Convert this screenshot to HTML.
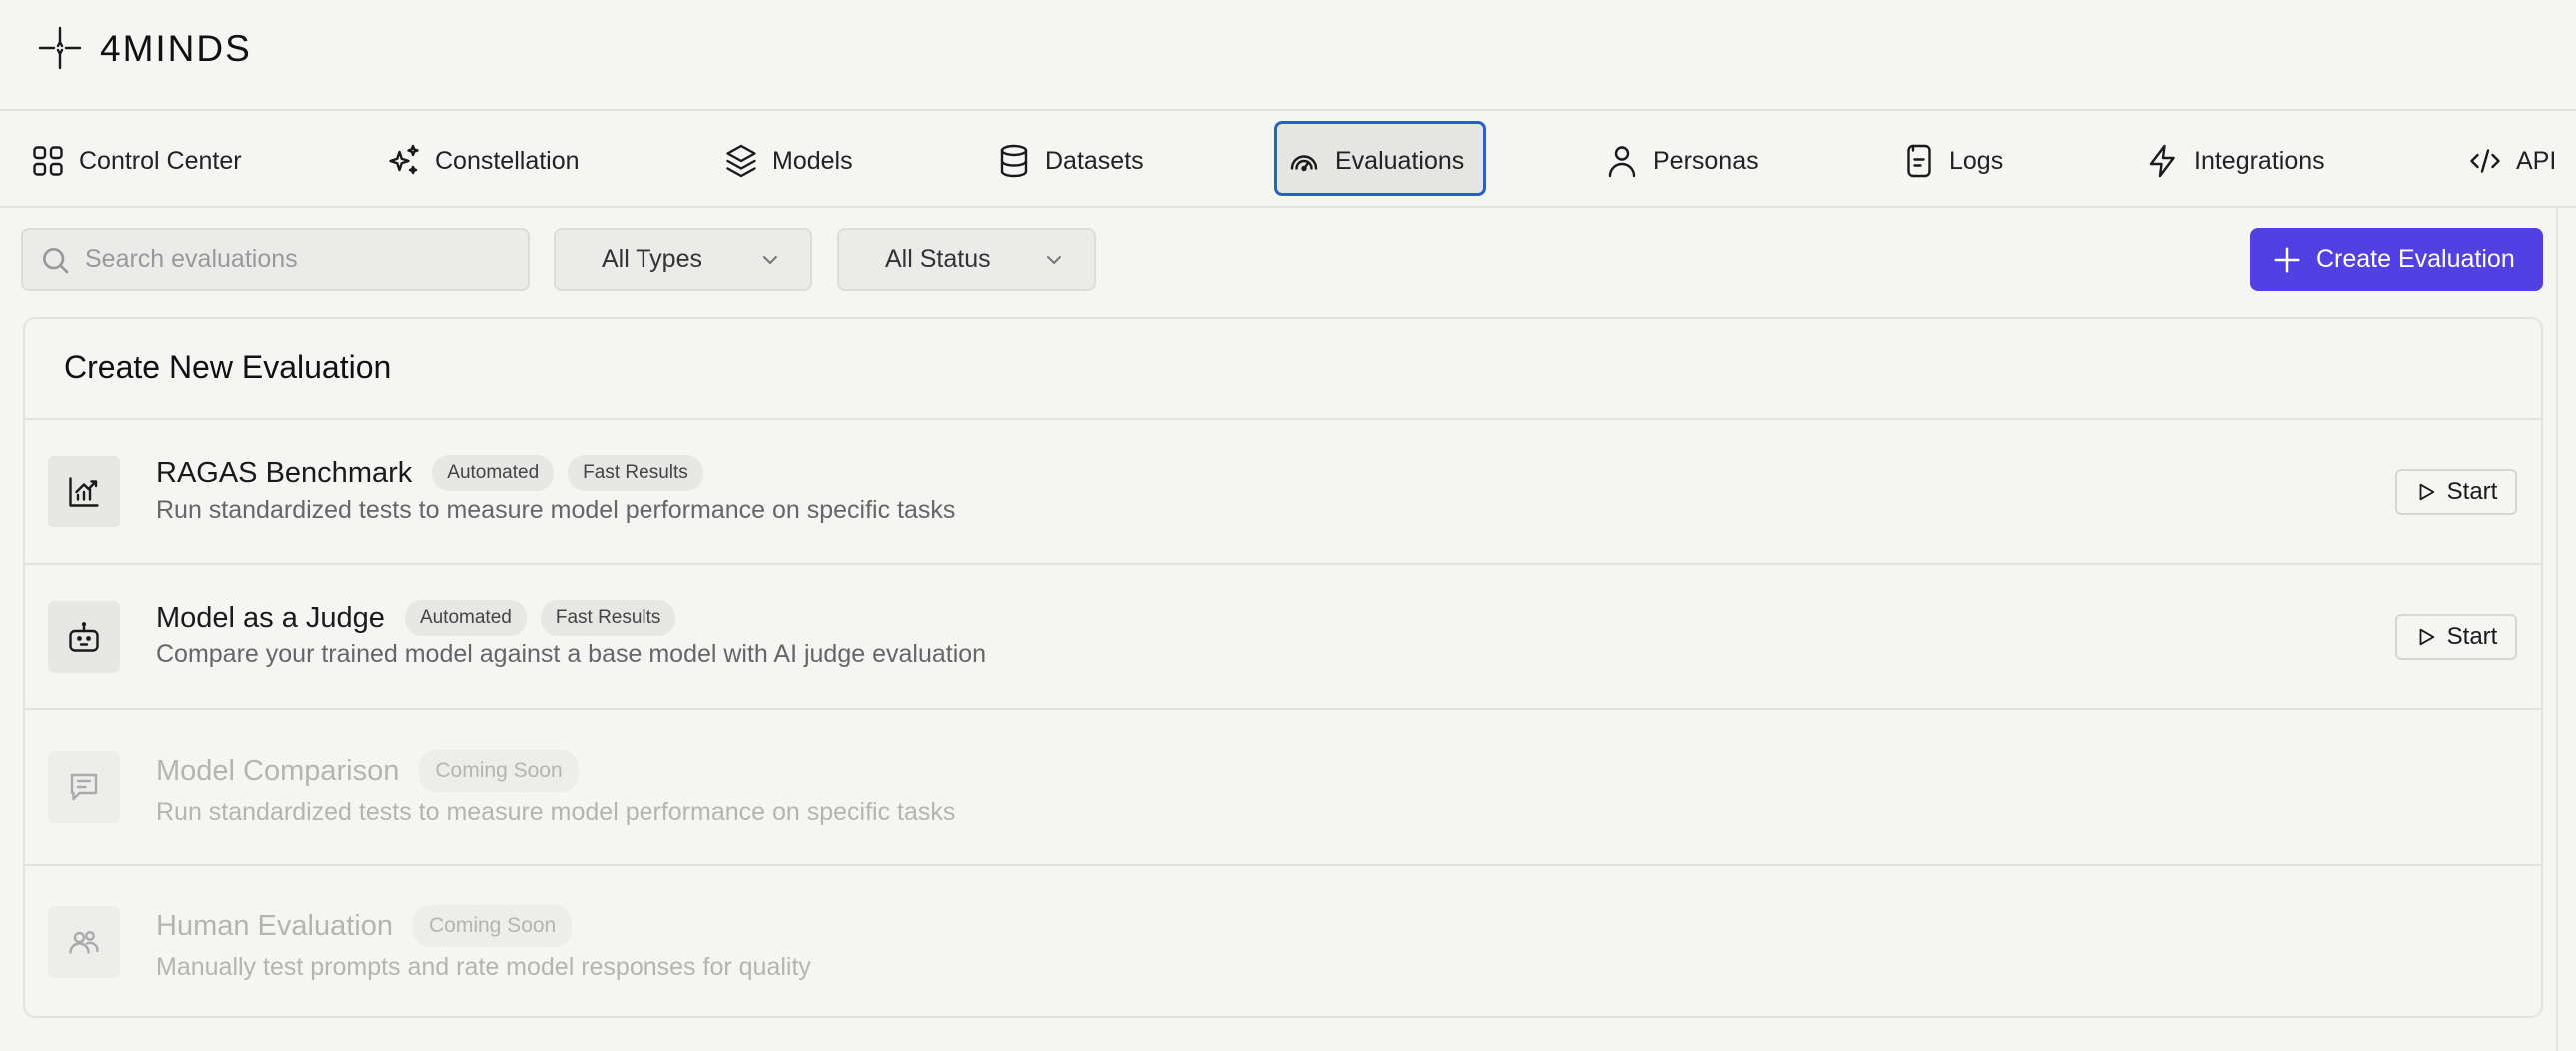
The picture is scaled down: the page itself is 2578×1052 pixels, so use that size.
<!DOCTYPE html>
<html><head><meta charset="utf-8"><style>
*{box-sizing:border-box;margin:0;padding:0}
body{width:2578px;height:1052px;background:#f5f5f3;font-family:"Liberation Sans",sans-serif;color:#1a1a1a;position:relative;overflow:hidden}
.abs{position:absolute}
svg{fill:none;stroke:#1a1a1a;stroke-width:2;stroke-linecap:round;stroke-linejoin:round}
.nav{position:absolute;top:161px;transform:translateY(-50%);display:flex;align-items:center;font-size:25px;color:#222}
.nav svg{width:36px;height:36px;margin-right:13px;stroke-width:1.6}
.box{position:absolute;background:#ebebea;border:2px solid #dcdcda;border-radius:8px;height:63px;top:228px;display:flex;align-items:center;font-size:25px}
.row{position:absolute;left:23px;width:2522px;border-top:2px solid #e2e2e0}
.ic{position:absolute;left:25px;width:72px;height:72px;background:#e7e7e5;border-radius:6px;display:flex;align-items:center;justify-content:center}
.ic svg{width:36px;height:36px;stroke-width:1.6}
.t{position:absolute;left:133px;font-size:29px;display:flex;align-items:center;white-space:nowrap}
.b{display:inline-block;background:#e7e7e5;border-radius:17px;font-size:19px;color:#444;padding:7px 15px;margin-left:20px}
.d{position:absolute;left:133px;font-size:25px;color:#666;white-space:nowrap}
.dim .t,.dim .d{color:#b4b4b2}.dim .b{color:#b4b4b2;background:#ededeb;font-size:21px;padding:9px 16px}
.dim .ic{background:#ededeb}.dim svg{stroke:#aaa}
.start{position:absolute;left:2374px;width:122px;height:46px;border:2px solid #d6d6d4;border-radius:6px;display:flex;align-items:center;justify-content:center;font-size:24px;background:#f5f5f3}
</style></head><body>
<svg class="abs" style="left:38px;top:26px;width:44px;height:44px;stroke-width:2.4" viewBox="0 0 44 44"><path d="M22 2v14M22 28v14M2 22h14M28 22h14M22 16l-2 4M22 16l2 4M22 28l-2-4M22 28l2-4"/></svg>
<div class="abs" style="left:100px;top:28px;font-size:37px;letter-spacing:2px;color:#111">4MINDS</div>
<div class="abs" style="left:0;top:109px;width:2578px;height:2px;background:#e2e2e0"></div>
<div class="abs" style="left:0;top:206px;width:2578px;height:2px;background:#e2e2e0"></div>

<div class="nav" style="left:30px"><svg viewBox="0 0 24 24"><rect x="3" y="3" width="7" height="7" rx="2"/><rect x="14" y="3" width="7" height="7" rx="2"/><rect x="3" y="14" width="7" height="7" rx="2"/><rect x="14" y="14" width="7" height="7" rx="2"/></svg>Control Center</div>
<div class="nav" style="left:386px"><svg viewBox="0 0 24 24"><path d="M9 6l1.5 4.5L15 12l-4.5 1.5L9 18l-1.5-4.5L3 12l4.5-1.5zM18 2l.8 2.2L21 5l-2.2.8L18 8l-.8-2.2L15 5l2.2-.8zM18 16l.6 1.4L20 18l-1.4.6L18 20l-.6-1.4L16 18l1.4-.6z"/></svg>Constellation</div>
<div class="nav" style="left:724px"><svg viewBox="0 0 24 24"><path d="M12 2l9 5-9 5-9-5zM3 12l9 5 9-5M3 17l9 5 9-5"/></svg>Models</div>
<div class="nav" style="left:997px"><svg viewBox="0 0 24 24"><ellipse cx="12" cy="5" rx="8" ry="3"/><path d="M4 5v14c0 1.7 3.6 3 8 3s8-1.3 8-3V5M4 12c0 1.7 3.6 3 8 3s8-1.3 8-3"/></svg>Datasets</div>
<div class="abs" style="left:1275px;top:121px;width:212px;height:75px;border:3px solid #2a5fc9;border-radius:8px;background:#e5e5e4"></div>
<div class="nav" style="left:1287px"><svg viewBox="0 0 24 24"><path d="M4 17a8 8 0 0116 0M7 17a5 5 0 0110 0M12 17l3-4"/><circle cx="12" cy="17" r="1"/></svg>Evaluations</div>
<div class="nav" style="left:1605px"><svg viewBox="0 0 24 24"><circle cx="12" cy="7" r="4"/><path d="M4 22a8 8 0 0116 0"/></svg>Personas</div>
<div class="nav" style="left:1902px"><svg viewBox="0 0 24 24"><rect x="5" y="2" width="14" height="20" rx="3"/><path d="M9 11h6M9 15h4M8 2v3"/></svg>Logs</div>
<div class="nav" style="left:2147px"><svg viewBox="0 0 24 24"><path d="M13 2L4 14h7l-1 8 9-12h-7z"/></svg>Integrations</div>
<div class="nav" style="left:2469px"><svg viewBox="0 0 24 24"><path d="M7 8l-4 4 4 4M17 8l4 4-4 4M14 5l-4 14"/></svg>API</div>

<div class="box" style="left:21px;width:509px;color:#999"><svg style="width:32px;height:32px;margin:0 14px 0 16px;stroke:#999" viewBox="0 0 24 24"><circle cx="11" cy="11" r="7"/><path d="M16 16l5 5"/></svg>Search evaluations</div>
<div class="box" style="left:554px;width:259px;padding-left:46px;color:#333">All Types<svg style="position:absolute;right:28px;width:24px;height:24px;stroke:#777" viewBox="0 0 24 24"><path d="M6 9l6 6 6-6"/></svg></div>
<div class="box" style="left:838px;width:259px;padding-left:46px;color:#333">All Status<svg style="position:absolute;right:28px;width:24px;height:24px;stroke:#777" viewBox="0 0 24 24"><path d="M6 9l6 6 6-6"/></svg></div>
<div class="abs" style="left:2252px;top:228px;width:293px;height:63px;background:#5140e2;border-radius:8px;color:#fff;font-size:25px;display:flex;align-items:center"><svg style="width:30px;height:30px;stroke:#fff;margin:0 14px 0 22px" viewBox="0 0 24 24"><path d="M12 3v18M3 12h18"/></svg>Create Evaluation</div>
<div class="abs" style="left:2558px;top:208px;width:2px;height:844px;background:#e4e4e2"></div>

<div class="abs" style="left:23px;top:317px;width:2522px;height:702px;border:2px solid #e2e2e0;border-radius:12px"></div>
<div class="abs" style="left:64px;top:349px;font-size:32px;color:#111">Create New Evaluation</div>

<div class="row" style="top:418px;height:146px">
<div class="ic" style="top:36px"><svg viewBox="0 0 24 24"><path d="M3 3v18h18M8 17v-3M12 17v-5M16 17v-7M7 12l5-5 3 3 5-5M17 5h3v3"/></svg></div>
<div class="t" style="top:35px">RAGAS Benchmark<span class="b">Automated</span><span class="b" style="margin-left:14px">Fast Results</span></div>
<div class="d" style="top:76px">Run standardized tests to measure model performance on specific tasks</div>
<div class="start" style="top:49px"><svg style="width:22px;height:22px;margin-right:10px" viewBox="0 0 24 24"><path d="M6 4l14 8-14 8z"/></svg>Start</div>
</div>
<div class="row" style="top:564px;height:145px">
<div class="ic" style="top:36px"><svg viewBox="0 0 24 24"><rect x="3" y="8" width="18" height="13" rx="3"/><path d="M12 8V4"/><circle cx="12" cy="3.5" r=".6"/><circle cx="9" cy="13" r=".8"/><circle cx="15" cy="13" r=".8"/><path d="M10 17h4"/></svg></div>
<div class="t" style="top:35px">Model as a Judge<span class="b">Automated</span><span class="b" style="margin-left:14px">Fast Results</span></div>
<div class="d" style="top:75px">Compare your trained model against a base model with AI judge evaluation</div>
<div class="start" style="top:49px"><svg style="width:22px;height:22px;margin-right:10px" viewBox="0 0 24 24"><path d="M6 4l14 8-14 8z"/></svg>Start</div>
</div>
<div class="row dim" style="top:709px;height:156px">
<div class="ic" style="top:41px"><svg viewBox="0 0 24 24"><path d="M4 4h16v12H9l-4 4v-4H4z M8 8h8M8 12h5"/></svg></div>
<div class="t" style="top:40px">Model Comparison<span class="b">Coming Soon</span></div>
<div class="d" style="top:88px">Run standardized tests to measure model performance on specific tasks</div>
</div>
<div class="row dim" style="top:865px;height:154px">
<div class="ic" style="top:40px"><svg viewBox="0 0 24 24"><circle cx="9" cy="9" r="3"/><circle cx="16" cy="8" r="2.5"/><path d="M3 19a6 6 0 0112 0M14 13a5 5 0 017 5"/></svg></div>
<div class="t" style="top:39px">Human Evaluation<span class="b">Coming Soon</span></div>
<div class="d" style="top:87px">Manually test prompts and rate model responses for quality</div>
</div>
</body></html>
